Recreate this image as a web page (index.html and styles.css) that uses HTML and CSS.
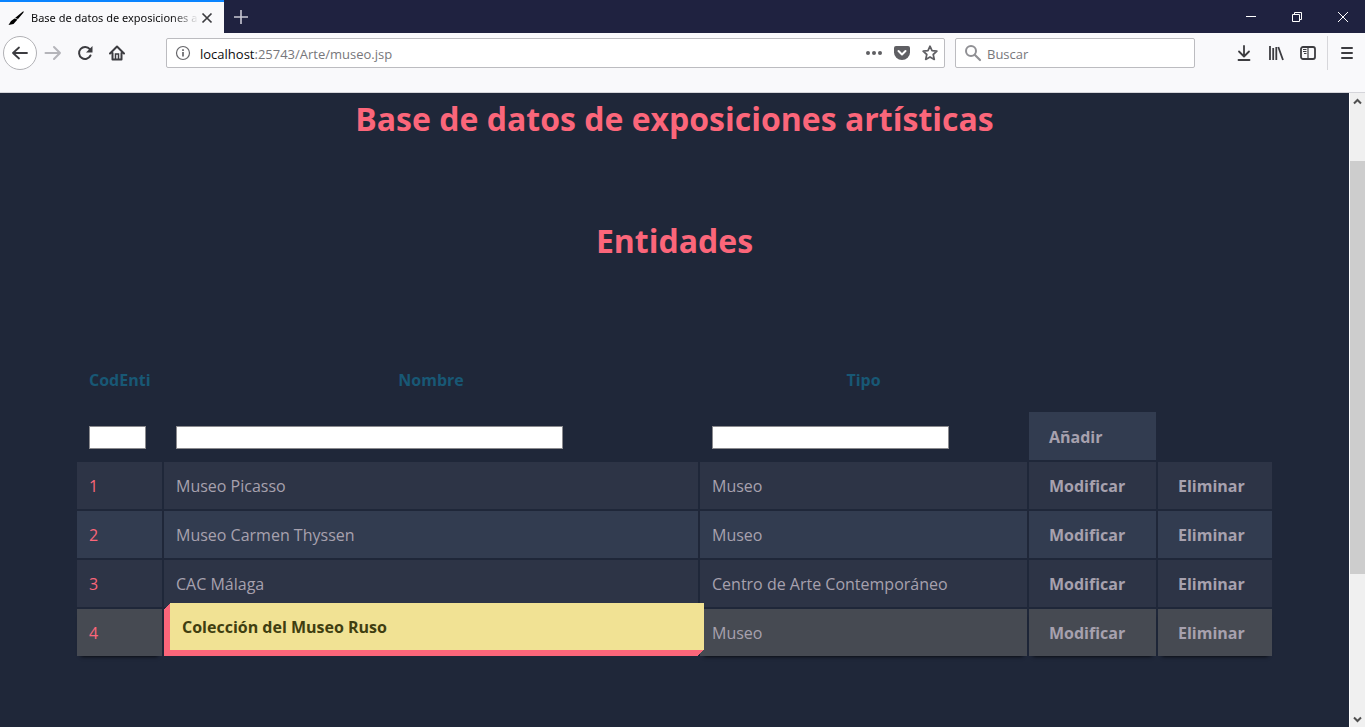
FILE: index.html
```html
<!DOCTYPE html>
<html lang="es">
<head>
<meta charset="utf-8">
<title>Base de datos de exposiciones artísticas</title>
<link rel="stylesheet" href="styles.css">
</head>
<body>
<header class="titlebar">
  <div class="tab">
    <svg class="favicon" width="16" height="16" viewBox="0 0 16 16" aria-hidden="true"><path d="M15.500 1 7 8 10 9 15.500 2.500zM6.500 8.500 3 11 0.500 15 5.500 14 9.500 9.500z" fill="#000"/></svg>
    <span class="tab-title">Base de datos de exposiciones a</span>
    <button class="icon tab-close" aria-label="Cerrar pestaña"><svg width="12" height="12" viewBox="0 0 12 12"><path d="M1.500 1.500l9 9M10.500 1.500l-9 9" stroke="#3c3c40" stroke-width="1.700"/></svg></button>
  </div>
  <button class="icon new-tab" aria-label="Nueva pestaña"><svg width="14" height="14" viewBox="0 0 14 14"><path d="M7 0v14M0 7h14" stroke="#c9c9d4" stroke-width="1.600"/></svg></button>
  <div class="window-controls">
    <button class="icon" aria-label="Minimizar"><svg width="12" height="12" viewBox="0 0 12 12"><path d="M1 5.500h10" stroke="#fff"/></svg></button>
    <button class="icon" aria-label="Restaurar"><svg width="12" height="12" viewBox="0 0 12 12"><path d="M1.500 3.500h7v7h-7zM3.500 3.500v-2h7v7h-2" fill="none" stroke="#fff"/></svg></button>
    <button class="icon" aria-label="Cerrar"><svg width="12" height="12" viewBox="0 0 12 12"><path d="M1 1l10 10M11 1L1 11" stroke="#fff"/></svg></button>
  </div>
</header>
<nav class="toolbar">
  <div class="nav-buttons">
    <button class="icon back" aria-label="Atrás"><svg width="18" height="16" viewBox="0 0 18 16"><path d="M16 8H2M8 2.500 2 8l6 5.500" fill="none" stroke="#3c3c40" stroke-width="1.800" stroke-linecap="round" stroke-linejoin="round"/></svg></button>
    <button class="icon" aria-label="Adelante"><svg width="18" height="16" viewBox="0 0 18 16"><path d="M1.500 8H16M10 2l6 6-6 6" fill="none" stroke="#b5b5ba" stroke-width="2" stroke-linecap="round" stroke-linejoin="round"/></svg></button>
    <button class="icon" aria-label="Recargar"><svg width="16" height="16" viewBox="0 0 16 16"><path d="M12.800 4.200A6 6 0 1 0 13.500 10.500" fill="none" stroke="#3c3c40" stroke-width="2" stroke-linecap="round"/><path d="M15.500 1v6.500H9z" fill="#3c3c40"/></svg></button>
    <button class="icon" aria-label="Inicio"><svg width="16" height="16" viewBox="0 0 16 16"><path d="M1 8.500 8 1.500l7 7M3.500 8v6.500h9V8" fill="none" stroke="#3c3c40" stroke-width="2" stroke-linecap="round" stroke-linejoin="round"/><path d="M6.500 14V9h3v5" fill="none" stroke="#3c3c40" stroke-width="1.500"/></svg></button>
  </div>
  <div class="field url">
    <svg width="16" height="16" viewBox="0 0 16 16" aria-hidden="true"><circle cx="8" cy="8" r="6.500" fill="none" stroke="#66666a" stroke-width="1.200"/><path d="M8 7v4.500M8 4.200v1.700" stroke="#66666a" stroke-width="1.700"/></svg>
    <span class="address"><span class="host">localhost</span>:25743/Arte/museo.jsp</span>
    <button class="icon" aria-label="Acciones de página"><svg width="18" height="16" viewBox="0 0 18 16" fill="#5f5f63"><circle cx="3" cy="8" r="2"/><circle cx="9" cy="8" r="2"/><circle cx="15" cy="8" r="2"/></svg></button>
    <button class="icon" aria-label="Guardar en Pocket"><svg width="16" height="16" viewBox="0 0 16 16"><path d="M2 1h12q2 0 2 2v4.500a8 7.500 0 0 1-16 0V3q0-2 2-2z" fill="#5f5f63"/><path d="M4.500 6 8 9.500 11.500 6" fill="none" stroke="#fff" stroke-width="2" stroke-linecap="round" stroke-linejoin="round"/></svg></button>
    <button class="icon" aria-label="Añadir a marcadores"><svg width="16" height="16" viewBox="0 0 16 16"><path d="M8 1.200l2 4.500 4.900.5-3.700 3.300 1.100 4.900L8 11.900l-4.300 2.500 1.100-4.900L1.100 6.200 6 5.700z" fill="none" stroke="#5f5f63" stroke-width="1.700" stroke-linejoin="round"/></svg></button>
  </div>
  <label class="field search">
    <svg width="18" height="18" viewBox="0 0 18 18" aria-hidden="true"><circle cx="7" cy="7" r="5" fill="none" stroke="#909094" stroke-width="2"/><path d="M10.700 10.700 16 16" stroke="#909094" stroke-width="2.200" stroke-linecap="round"/></svg>
    <input type="text" placeholder="Buscar" aria-label="Buscar">
  </label>
  <div class="tools">
    <button class="icon" aria-label="Descargas"><svg width="16" height="16" viewBox="0 0 16 16"><path d="M8 1v10M3 6.500l5 5 5-5M2.500 15h11" fill="none" stroke="#3c3c40" stroke-width="1.800" stroke-linecap="round" stroke-linejoin="round"/></svg></button>
    <button class="icon" aria-label="Catálogo"><svg width="16" height="16" viewBox="0 0 16 16"><path d="M2 1v14M5.200 3v12M8.300 2v13M10.300 2l4.700 13" fill="none" stroke="#3c3c40" stroke-width="1.800"/></svg></button>
    <button class="icon" aria-label="Barra lateral"><svg width="16" height="16" viewBox="0 0 16 16"><rect x="1" y="2" width="14" height="12" rx="2" fill="none" stroke="#3c3c40" stroke-width="1.800"/><path d="M8 2v12" stroke="#3c3c40" stroke-width="1.200"/><path d="M3 4.500h3.500M3 6.500h3.500M4 8.500h2.500" stroke="#3c3c40"/></svg></button>
  </div>
  <div class="menu"><button class="icon" aria-label="Abrir menú"><svg width="14" height="14" viewBox="0 0 14 14"><path d="M2 2h10M2 7h10M2 12h10" stroke="#3c3c40" stroke-width="2" stroke-linecap="round"/></svg></button></div>
</nav>
<div class="viewport">
  <main class="page">
    <h1>Base de datos de exposiciones artísticas</h1>
    <h2>Entidades</h2>
    <table class="entities">
      <colgroup><col class="col-code"><col><col class="col-type"><col class="col-edit"><col class="col-delete"></colgroup>
      <thead>
        <tr><th scope="col">CodEnti</th><th scope="col">Nombre</th><th scope="col">Tipo</th><td></td><td></td></tr>
      </thead>
      <tbody>
        <tr class="new-row">
          <td><input class="short" type="text" aria-label="CodEnti"></td>
          <td><input class="long" type="text" aria-label="Nombre"></td>
          <td><input class="medium" type="text" aria-label="Tipo"></td>
          <td class="add"><button>Añadir</button></td>
          <td></td>
        </tr>
        <tr class="row"><td class="code">1</td><td>Museo Picasso</td><td>Museo</td><td><button>Modificar</button></td><td><button>Eliminar</button></td></tr>
        <tr class="row alt"><td class="code">2</td><td>Museo Carmen Thyssen</td><td>Museo</td><td><button>Modificar</button></td><td><button>Eliminar</button></td></tr>
        <tr class="row"><td class="code">3</td><td>CAC Málaga</td><td>Centro de Arte Contemporáneo</td><td><button>Modificar</button></td><td><button>Eliminar</button></td></tr>
        <tr class="row active"><td class="code">4</td><td class="raised">Colección del Museo Ruso</td><td>Museo</td><td><button>Modificar</button></td><td><button>Eliminar</button></td></tr>
      </tbody>
    </table>
  </main>
  <div class="scrollbar" aria-hidden="true">
    <svg width="15" height="16" viewBox="0 0 15 16"><path d="M4 10.500 7.500 7l3.500 3.500" fill="none" stroke="#505050" stroke-width="2"/></svg>
    <div class="track"><div class="thumb"></div></div>
    <svg width="15" height="16" viewBox="0 0 15 16"><path d="M4 6.500 7.500 10 11 6.500" fill="none" stroke="#505050" stroke-width="2"/></svg>
  </div>
</div>
</body>
</html>
```
FILE: styles.css
```css
* { box-sizing: border-box; }

body {
  margin: 0;
  height: 100vh;
  display: flex;
  flex-direction: column;
  overflow: hidden;
  font-family: "Open Sans", sans-serif;
  background: #1f2739;
}

button {
  border: 0;
  padding: 0;
  background: none;
  font: inherit;
  color: inherit;
}

.icon {
  display: flex;
  align-items: center;
  justify-content: center;
  flex: none;
}

svg { flex: none; }

/* Browser title bar */
.titlebar {
  display: flex;
  height: 33px;
  flex: none;
  background: #1f2240;
}

.tab {
  display: flex;
  align-items: center;
  width: 224px;
  padding: 0 10px 0 8px;
  border-top: 2px solid #0a84ff;
  background: #f9f9fb;
}

.tab-title {
  flex: 1;
  margin-left: 7px;
  white-space: nowrap;
  font: 11px "Noto Sans", sans-serif;
  color: #0c0c0d;
  mask-image: linear-gradient(to right, #000 140px, transparent 168px);
}

.tab-close { width: 14px; height: 16px; }

.new-tab { width: 34px; }

.window-controls { display: flex; margin-left: auto; margin-right: -1px; }
.window-controls .icon { width: 46px; }

/* Navigation toolbar */
.toolbar {
  display: flex;
  align-items: flex-start;
  height: 60px;
  flex: none;
  padding: 3px 0 0 3px;
  border-bottom: 1px solid #d5d5da;
  background: #f9f9fb;
}

.nav-buttons { display: flex; align-items: center; height: 34px; margin-right: 33px; }
.nav-buttons .icon { width: 32px; height: 32px; }
.nav-buttons .back {
  width: 34px;
  height: 34px;
  border: 1px solid #b1b1b5;
  border-radius: 50%;
  background: #fff;
}

.field {
  display: flex;
  align-items: center;
  height: 30px;
  margin-top: 2px;
  border: 1px solid #bcbcc0;
  border-radius: 2px;
  background: #fff;
  font-size: 13px;
}

.url { flex: 1; padding-left: 8px; }
.address { flex: 1; margin-left: 9px; padding-top: 2px; color: #77777b; }
.host { color: #0c0c0d; }
.url .icon { width: 28px; }

.search { width: 240px; margin-left: 10px; padding-left: 8px; }
.search input {
  flex: 1;
  min-width: 0;
  margin-left: 5px;
  padding: 2px 0 0;
  border: 0;
  outline: 0;
  font: inherit;
}
.search input::placeholder { color: #77777b; opacity: 1; }

.tools { display: flex; height: 34px; margin-left: 33px; }
.tools .icon { width: 32px; }

.menu {
  display: flex;
  justify-content: center;
  width: 38px;
  height: 34px;
  margin-left: 3px;
  border-left: 1px solid #d7d7db;
}

/* Page content */
.viewport { display: flex; flex: 1; min-height: 0; }

.page {
  flex: 1;
  overflow: hidden;
  padding: 3px 75px 0;
  color: #a7a1ae;
}

h1, h2 {
  margin: 0;
  font-size: 32px;
  line-height: 46px;
  text-align: center;
  color: #fb667a;
}
h2 { margin-top: 76px; }

.entities {
  width: 100%;
  margin-top: 81px;
  table-layout: fixed;
  border-spacing: 2px;
  font-size: 16px;
  line-height: 23px;
}

.col-code { width: 85px; }
.col-type { width: 327px; }
.col-edit { width: 127px; }
.col-delete { width: 114px; }

.entities td, .entities th { height: 47px; padding: 13px 12px 11px; text-align: left; }
.entities th { height: 63px; padding-top: 15px; color: #185875; text-align: center; }
.new-row td { height: 48px; }

.entities input {
  display: block;
  height: 23px;
  padding: 1px;
  border: 1px solid #8a8a8e;
  background: #fff;
  font: inherit;
}
.short { width: 57px; }
.medium { width: 237px; }
.long { width: 387px; }

.entities button { display: block; padding: 0 8px; font-weight: 700; }

.row { background: #2d3446; }
.alt, .add { background: #323c50; }
.active { background: #464a52; }
.active td { box-shadow: 0 4px 4px -4px #000; }
.code { color: #fb667a; }

.active .raised {
  background: #f1e294;
  color: #403e10;
  font-weight: 700;
  transform: translate(6px, -6px);
  box-shadow: -1px 1px #fb667a, -2px 2px #fb667a, -3px 3px #fb667a,
    -4px 4px #fb667a, -5px 5px #fb667a, -6px 6px #fb667a;
}

/* Page scrollbar */
.scrollbar {
  display: flex;
  flex-direction: column;
  width: 16px;
  border-left: 1px solid #fff;
  background: #f0f0f0;
}
.track { flex: 1; padding-top: 52px; }
.thumb { height: 75%; background: #cdcdcd; }
```
